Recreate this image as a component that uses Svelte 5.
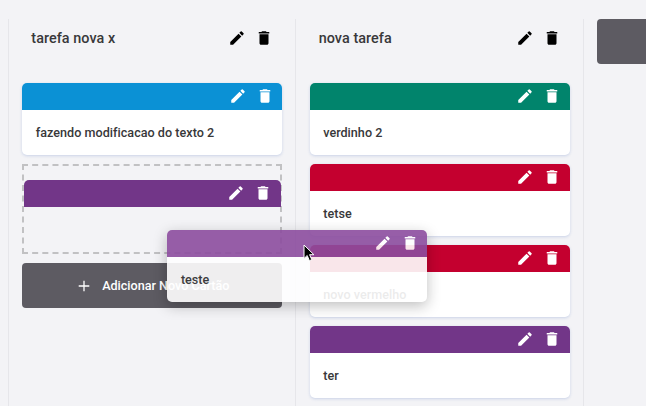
<script>
  const columns = [
    {
      title: 'tarefa nova x',
      cards: [{ text: 'fazendo modificacao do texto 2', color: '#0b91d5' }],
      placeholder: '#723688',
      button: true
    },
    {
      title: 'nova tarefa',
      cards: [
        { text: 'verdinho 2', color: '#01846c' },
        { text: 'tetse', color: '#c4002f' },
        { text: 'novo vermelho', color: '#c4002f' },
        { text: 'ter', color: '#723688' }
      ]
    }
  ];
</script>

{#snippet actions()}
  <div class="actions">
    <svg viewBox="0 0 24 24"><path d="M3 17.25V21h3.75L17.81 9.94l-3.75-3.75L3 17.25zM20.71 7.04a1 1 0 0 0 0-1.41l-2.34-2.34a1 1 0 0 0-1.41 0l-1.83 1.83 3.75 3.75 1.83-1.83z" /></svg>
    <svg viewBox="0 0 24 24"><path d="M6 19c0 1.1.9 2 2 2h8c1.1 0 2-.9 2-2V7H6v12zM19 4h-3.500l-1-1h-5l-1 1H5v2h14V4z" /></svg>
  </div>
{/snippet}

{#snippet card(text, color)}
  <article class="card">
    <div class="bar" style="background: {color}">{@render actions()}</div>
    <p>{text}</p>
  </article>
{/snippet}

<main>
  {#each columns as column}
    <section class="column">
      <header><h2>{column.title}</h2>{@render actions()}</header>
      <div class="list">
        {#each column.cards as item}
          {@render card(item.text, item.color)}
        {/each}
        {#if column.placeholder}
          <div class="placeholder">
            <div class="bar" style="background: {column.placeholder}">{@render actions()}</div>
          </div>
        {/if}
        {#if column.button}
          <button class="add">
            <svg viewBox="0 0 12 12"><path d="M6 .7v10.600M.7 6h10.600" /></svg>
            <span>Adicionar Novo Cartão</span>
          </button>
        {/if}
      </div>
    </section>
  {/each}
  <section class="column last"><div class="add-column"></div></section>

  <div class="dragged">{@render card('teste', '#8c4d9f')}</div>
  <svg class="cursor" viewBox="0 0 12 18"><path d="M1 1v13.500l3.200-3 2.200 5.200 2.400-1-2.200-5h4.300z" /></svg>
</main>

<style>
  :global(body) {
    margin: 0;
    overflow: hidden;
    background: #f3f3f6;
  }
  main {
    position: relative;
    box-sizing: border-box;
    display: flex;
    width: 646px;
    height: 406px;
    padding: 19px 0 0 8px;
    overflow: hidden;
    background: #f3f3f6;
    color: #38383a;
    font-family: Roboto, sans-serif;
  }
  .column {
    flex: none;
    box-sizing: border-box;
    width: 287.400px;
    padding: 0 13.100px 0 13.300px;
    border-left: 1px solid #e6e6ea;
  }
  header {
    display: flex;
    align-items: center;
    justify-content: space-between;
    height: 39px;
    padding: 0 9px 0 9px;
    margin-bottom: 25px;
  }
  h2 {
    margin: 0;
    font-size: 14.400px;
    font-weight: 500;
    line-height: 39px;
    letter-spacing: 0.050px;
  }
  .actions {
    display: flex;
    gap: 9px;
    color: #000;
  }
  header .actions {
    margin-top: -1px;
  }
  .actions svg {
    display: block;
    width: 18px;
    height: 18px;
    fill: currentColor;
  }
  .list {
    display: flex;
    flex-direction: column;
    gap: 9px;
  }
  .card {
    box-sizing: border-box;
    height: 72px;
    border-radius: 5px;
    background: #fff;
    box-shadow: 0 1px 3px rgba(150, 170, 215, 0.45);
  }
  .bar {
    display: flex;
    justify-content: flex-end;
    box-sizing: border-box;
    height: 27px;
    padding: 4px 8.500px 0 0;
    border-radius: 5px 5px 0 0;
  }
  .bar .actions {
    color: #fff;
  }
  .card p {
    margin: 0;
    padding-left: 13.500px;
    font-size: 12.600px;
    font-weight: 500;
    line-height: 46px;
    letter-spacing: 0.020px;
  }
  .placeholder {
    box-sizing: border-box;
    height: 90px;
    padding-top: 14.400px;
    border: 2px dashed #c1c1c3;
  }
  .placeholder .bar {
    margin-right: -1px;
    padding-right: 9.500px;
  }
  .add {
    display: flex;
    align-items: center;
    justify-content: center;
    gap: 12px;
    height: 45px;
    padding: 0 0 0 3px;
    border: 0;
    border-radius: 4px;
    background: #5d5b62;
    color: #fff;
    font: 500 12.600px Roboto, sans-serif;
  }
  .add svg {
    width: 12px;
    height: 12px;
    fill: none;
    stroke: #fff;
    stroke-width: 1.300;
  }
  .add-column {
    width: 260px;
    height: 45px;
    border-radius: 4px;
    background: #5d5b62;
  }
  .dragged {
    position: absolute;
    top: 230px;
    left: 167.400px;
    width: 260px;
    opacity: 0.9;
  }
  .dragged .card {
    box-shadow: 0 4px 14px rgba(0, 0, 0, 0.28);
  }
  .cursor {
    position: absolute;
    top: 243.500px;
    left: 302.700px;
    width: 12px;
    height: 18px;
    fill: #000;
    stroke: #fff;
    stroke-width: 1;
  }
</style>
